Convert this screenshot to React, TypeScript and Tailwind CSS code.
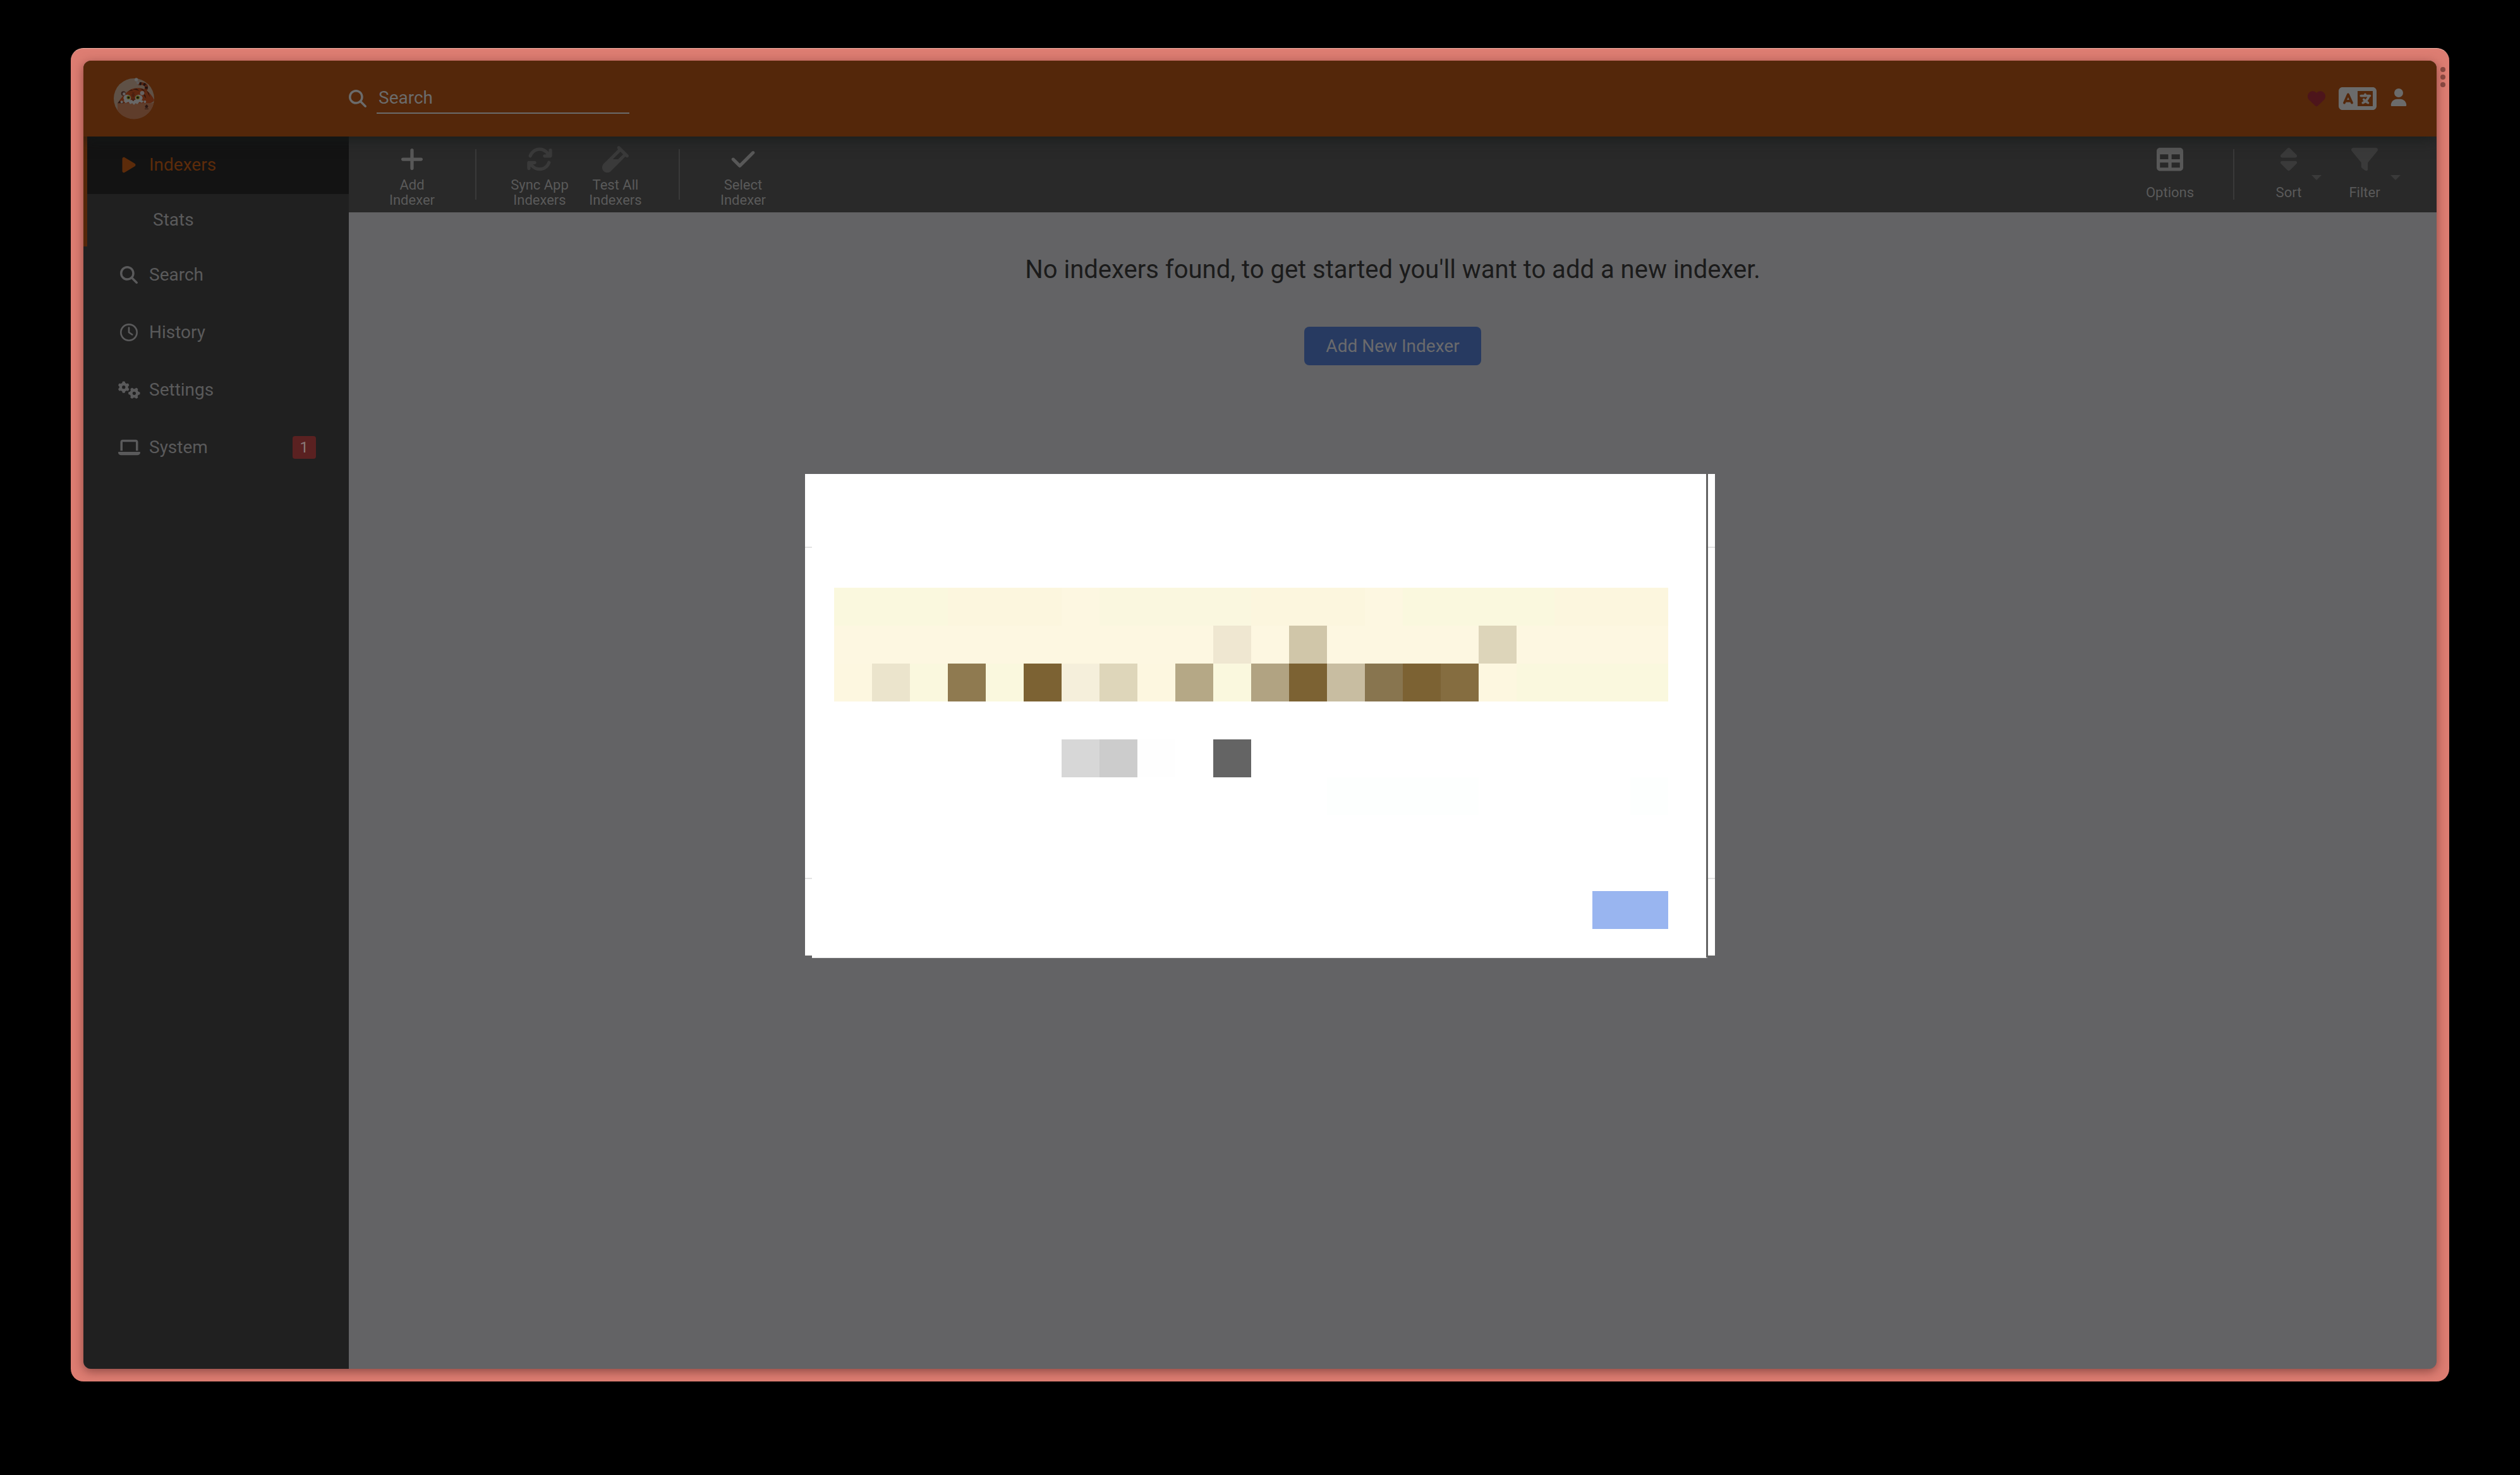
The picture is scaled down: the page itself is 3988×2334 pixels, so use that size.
import type { ReactNode } from 'react';
import type { IconType } from 'react-icons';
import {
  FaArrowsRotate,
  FaCheck,
  FaFilter,
  FaGears,
  FaHeart,
  FaLanguage,
  FaLaptop,
  FaMagnifyingGlass,
  FaPlay,
  FaPlus,
  FaRegClock,
  FaSort,
  FaTable,
  FaUser,
  FaVial,
} from 'react-icons/fa6';

function Logo() {
  return (
    <svg viewBox="18 18 192 192" className="size-16 overflow-visible" aria-hidden="true">
      <circle cx="114" cy="114" r="96" fill="#5f5146" />
      <path d="M36 136H208A96 96 0 0 1 36 171Z" fill="#5f3d2b" />
      <path d="M132 40C150 32 176 38 180 54C183 66 177 76 168 82L158 76C166 70 168 60 162 54C155 48 144 50 134 50Z" fill="#54230f" />
      <path d="M142 37L150 36L148 50L140 50ZM162 40L172 44L164 54L157 50ZM180 58L178 68L166 66L167 58Z" fill="#1f1210" />
      <circle cx="125" cy="24" r="8" fill="#666" />
      <path d="M124 29L140 36L136 48L128 44Z" fill="#5e5b5a" />
      <path d="M38 136C48 116 70 88 100 70C130 58 166 64 184 84C198 98 206 112 210 120C208 130 194 136 186 136Z" fill="#5e2710" />
      <path d="M84 80L102 72L112 78L104 76ZM108 70L126 67L140 77L124 73ZM142 66L156 69L170 85L156 74ZM174 76L184 86L190 108L182 92ZM158 90L168 98L172 114L164 104ZM102 94H118L110 97ZM103 86H119L111 89Z" fill="#2c140d" />
      <circle cx="64" cy="90" r="11" fill="#35201a" />
      <circle cx="67" cy="92" r="7" fill="#676363" />
      <circle cx="153" cy="88" r="10" fill="#676363" />
      <ellipse cx="82" cy="111" rx="18" ry="16" fill="#686868" />
      <ellipse cx="137" cy="111" rx="18" ry="16" fill="#686868" />
      <path d="M64 124C84 114 96 124 110 120C126 122 140 114 160 126L152 134L140 130L130 140L122 136L114 144L106 136L96 140L88 130L74 136Z" fill="#686868" />
      <path d="M102 96L110 112L118 96L114 92H106ZM100 114H121L112 126H109Z" fill="#482011" />
      <circle cx="88" cy="109" r="9" fill="#55550f" />
      <circle cx="88" cy="109" r="5" fill="#111" />
      <circle cx="132" cy="109" r="9" fill="#55550f" />
      <circle cx="132" cy="109" r="5" fill="#111" />
      <path d="M36 136L46 124L52 136ZM60 126L66 136H56Z" fill="#2a1a14" />
      <circle cx="56" cy="130" r="6" fill="#666" />
      <circle cx="166" cy="129" r="6" fill="#666" />
      <path d="M170 146L174 142L178 146L182 150L178 158H169L166 150ZM165 161H183V164H165Z" fill="#2c1711" />
    </svg>
  );
}

function NavItem({
  icon: Icon,
  label,
  active,
  wide,
  badge,
}: {
  icon: IconType;
  label: string;
  active?: boolean;
  wide?: boolean;
  badge?: string;
}) {
  return (
    <a
      href="#"
      className={
        active
          ? 'flex h-[91px] items-center bg-[#131313] pr-[52px] pb-0.5 pl-12 text-[28px] leading-10 text-[#5c2b0a]'
          : 'flex h-[91px] items-center pr-[52px] pb-0.5 pl-12 text-[28px] leading-10 text-[#5a5a5b]'
      }
    >
      <span className="mr-[14px] flex w-9 shrink-0 justify-center">
        <Icon className={wide ? 'h-7 w-[35px]' : 'size-7'} />
      </span>
      {label}
      {badge && (
        <span className="ml-auto flex h-9 items-center rounded bg-[#5a2121] px-3 text-2xl text-[#8a7878]">
          {badge}
        </span>
      )}
    </a>
  );
}

function ToolButton({
  icon: Icon,
  label,
  disabled,
  menu,
}: {
  icon: IconType;
  label: ReactNode;
  disabled?: boolean;
  menu?: boolean;
}) {
  return (
    <button
      type="button"
      disabled={disabled}
      className={menu ? 'flex w-[120px] flex-col items-center pt-[15px] pr-7' : 'flex w-[120px] flex-col items-center pt-[15px]'}
    >
      <Icon className={disabled ? 'size-[42px] text-[#3a3a3a]' : 'size-[42px] text-[#585858]'} />
      <span className="mt-2 flex h-12 items-center text-center text-[22px] leading-6 text-[#5a5a5a]">
        <span className="relative">
          {label}
          {menu && (
            <svg viewBox="0 0 16 8" className="absolute bottom-8 left-full ml-4 h-2 w-4" aria-hidden="true">
              <path d="M0 0H16L8 8Z" fill="#3a3a3a" />
            </svg>
          )}
        </span>
      </span>
    </button>
  );
}

function Separator() {
  return <span className="mx-10 mt-5 h-20 w-[2px] bg-[#393939]" />;
}

const MOSAIC: { color: string; place: string }[] = [
  { color: 'bg-[#faf8de]', place: 'col-start-1 col-span-3 row-start-4' },
  { color: 'bg-[#fcf6de]', place: 'col-start-4 col-span-3 row-start-4' },
  { color: 'bg-[#fdf7e1]', place: 'col-start-7 col-span-1 row-start-4' },
  { color: 'bg-[#faf7df]', place: 'col-start-8 col-span-4 row-start-4' },
  { color: 'bg-[#fcf6de]', place: 'col-start-12 col-span-3 row-start-4' },
  { color: 'bg-[#fdf7e1]', place: 'col-start-15 col-span-1 row-start-4' },
  { color: 'bg-[#faf8de]', place: 'col-start-16 col-span-4 row-start-4' },
  { color: 'bg-[#fcf6de]', place: 'col-start-20 col-span-3 row-start-4' },
  { color: 'bg-[#fdf7e1]', place: 'col-start-1 col-span-10 row-start-5' },
  { color: 'bg-[#efe7d1]', place: 'col-start-11 col-span-1 row-start-5' },
  { color: 'bg-[#fdf7e1]', place: 'col-start-12 col-span-1 row-start-5' },
  { color: 'bg-[#d0c6a9]', place: 'col-start-13 col-span-1 row-start-5' },
  { color: 'bg-[#fdf7e1]', place: 'col-start-14 col-span-4 row-start-5' },
  { color: 'bg-[#ddd5ba]', place: 'col-start-18 col-span-1 row-start-5' },
  { color: 'bg-[#fdf7e1]', place: 'col-start-19 col-span-4 row-start-5' },
  { color: 'bg-[#fdf7e0]', place: 'col-start-1 col-span-1 row-start-6' },
  { color: 'bg-[#ebe4cc]', place: 'col-start-2 col-span-1 row-start-6' },
  { color: 'bg-[#faf8de]', place: 'col-start-3 col-span-1 row-start-6' },
  { color: 'bg-[#8f7a50]', place: 'col-start-4 col-span-1 row-start-6' },
  { color: 'bg-[#faf8de]', place: 'col-start-5 col-span-1 row-start-6' },
  { color: 'bg-[#7c6233]', place: 'col-start-6 col-span-1 row-start-6' },
  { color: 'bg-[#f5efdb]', place: 'col-start-7 col-span-1 row-start-6' },
  { color: 'bg-[#ded6ba]', place: 'col-start-8 col-span-1 row-start-6' },
  { color: 'bg-[#fdf7e0]', place: 'col-start-9 col-span-1 row-start-6' },
  { color: 'bg-[#b5a886]', place: 'col-start-10 col-span-1 row-start-6' },
  { color: 'bg-[#faf8de]', place: 'col-start-11 col-span-1 row-start-6' },
  { color: 'bg-[#b1a382]', place: 'col-start-12 col-span-1 row-start-6' },
  { color: 'bg-[#7c6233]', place: 'col-start-13 col-span-1 row-start-6' },
  { color: 'bg-[#c8bda1]', place: 'col-start-14 col-span-1 row-start-6' },
  { color: 'bg-[#88754f]', place: 'col-start-15 col-span-1 row-start-6' },
  { color: 'bg-[#7c6233]', place: 'col-start-16 col-span-1 row-start-6' },
  { color: 'bg-[#856d40]', place: 'col-start-17 col-span-1 row-start-6' },
  { color: 'bg-[#fdf7e0]', place: 'col-start-18 col-span-1 row-start-6' },
  { color: 'bg-[#faf8de]', place: 'col-start-19 col-span-4 row-start-6' },
  { color: 'bg-[#d7d7d7]', place: 'col-start-7 col-span-1 row-start-8' },
  { color: 'bg-[#cccccc]', place: 'col-start-8 col-span-1 row-start-8' },
  { color: 'bg-[#fefefe]', place: 'col-start-9 col-span-1 row-start-8' },
  { color: 'bg-[#646464]', place: 'col-start-11 col-span-1 row-start-8' },
  { color: 'bg-[#fdfffe]', place: 'col-start-14 col-span-4 row-start-9' },
  { color: 'bg-[#fdfffe]', place: 'col-start-22 col-span-1 row-start-9' },
];

/* Dialog whose contents are hidden behind a pixelated cover. */
function CensoredDialog() {
  return (
    <div role="dialog" aria-modal="true" aria-label="Dialog" className="relative flex h-[762px] w-[1440px] flex-col bg-white">
      <div className="h-[117px] border-b-2 border-[#e3e3e3]" />
      <div className="grow" />
      <div className="h-[123px] border-t-2 border-[#e3e3e3]" />
      <div className="absolute top-0 left-[11px] grid h-[766px] w-[1418px] auto-rows-[60px] grid-cols-[repeat(22,60px)] grid-rows-[repeat(12,60px)] border-r-[3px] border-b border-r-[#636363] border-b-[#e8e8e8] bg-white pl-[35px]">
        {MOSAIC.map((cell) => (
          <span key={cell.place} className={`${cell.place} ${cell.color}`} />
        ))}
        <button type="button" aria-label="Confirm" className="col-span-2 col-start-21 row-start-12 bg-[#99b5f0]" />
      </div>
    </div>
  );
}

export default function App() {
  return (
    <div className="flex h-screen flex-col bg-black px-28 pt-[76px] pb-[148px] font-[Roboto,sans-serif]">
      <div className="relative flex grow flex-col rounded-[20px] border-t border-[#f0b0a4] bg-[#dd7d72] p-5 pt-[19px]">
        <div className="absolute top-[29px] right-[6px] flex flex-col gap-1" aria-hidden="true">
          <span className="size-2 rounded-full bg-[#8b4b43]" />
          <span className="size-2 rounded-full bg-[#8b4b43]" />
          <span className="size-2 rounded-full bg-[#8b4b43]" />
        </div>

        <div className="relative flex grow flex-col overflow-hidden rounded-xl bg-[#636365] shadow-[0_4px_16px_rgba(60,20,20,0.5)]">
          <header className="z-10 flex h-[120px] shrink-0 items-center bg-[#54270a] pr-[30px] pl-12 shadow-[0_0_24px_#151a19]">
            <a href="#" aria-label="Home" className="mr-[308px]">
              <Logo />
            </a>
            <label htmlFor="search" className="mr-4">
              <FaMagnifyingGlass className="text-[28px] text-[#6b6b6b]" />
            </label>
            <input
              id="search"
              type="text"
              placeholder="Search"
              aria-label="Search"
              className="h-12 w-[400px] border-b-2 border-[#6b6b6b] bg-transparent px-[3px] pb-0.5 text-[28px] text-[#6b6b6b] outline-none placeholder:text-[#6b6b6b]"
            />
            <div className="ml-auto flex items-center gap-[5px] text-[#6b6b6b]">
              <a href="#" aria-label="Donate" className="flex w-[60px] justify-center text-[28px] text-[#4d151b]">
                <FaHeart />
              </a>
              <button type="button" aria-label="Language" className="flex w-[60px] justify-center">
                <FaLanguage className="h-12 w-[60px]" />
              </button>
              <button type="button" aria-label="Account" className="flex w-[60px] justify-center text-[28px]">
                <FaUser className="mb-1" />
              </button>
            </div>
          </header>

          <div className="flex grow">
            <nav className="w-[420px] shrink-0 bg-[#202020]">
              <div className="border-l-6 border-[#54270a]">
                <NavItem icon={FaPlay} label="Indexers" active />
                <a href="#" className="flex h-[83px] items-center pb-0.5 pl-[104px] text-[28px] leading-10 text-[#5a5a5b]">
                  Stats
                </a>
              </div>
              <div className="border-l-6 border-[#202020]">
                <NavItem icon={FaMagnifyingGlass} label="Search" />
                <NavItem icon={FaRegClock} label="History" />
                <NavItem icon={FaGears} label="Settings" wide />
                <NavItem icon={FaLaptop} label="System" wide badge="1" />
              </div>
            </nav>

            <main className="flex grow flex-col">
              <div role="toolbar" aria-label="Indexer actions" className="flex h-[120px] bg-[#292929] px-10">
                <ToolButton icon={FaPlus} label={<>Add<br />Indexer</>} />
                <Separator />
                <ToolButton icon={FaArrowsRotate} label={<>Sync App<br />Indexers</>} disabled />
                <ToolButton icon={FaVial} label={<>Test All<br />Indexers</>} disabled />
                <Separator />
                <ToolButton icon={FaCheck} label={<>Select<br />Indexer</>} />
                <span className="grow" />
                <ToolButton icon={FaTable} label="Options" />
                <Separator />
                <ToolButton icon={FaSort} label="Sort" disabled menu />
                <ToolButton icon={FaFilter} label="Filter" disabled menu />
              </div>

              <section className="flex flex-col items-center pt-[65px]">
                <h1 className="text-[40px] leading-[52px] text-[#1b1b1b]">
                  No indexers found, to get started you'll want to add a new indexer.
                </h1>
                <button
                  type="button"
                  className="mt-16 h-[61px] rounded-lg bg-[#273a61] px-[34px] text-[28px] leading-10 text-[#6a6a6c]"
                >
                  Add New Indexer
                </button>
              </section>
            </main>
          </div>

          <div className="absolute inset-0 z-20 flex items-center justify-center">
            <CensoredDialog />
          </div>
        </div>
      </div>
    </div>
  );
}
